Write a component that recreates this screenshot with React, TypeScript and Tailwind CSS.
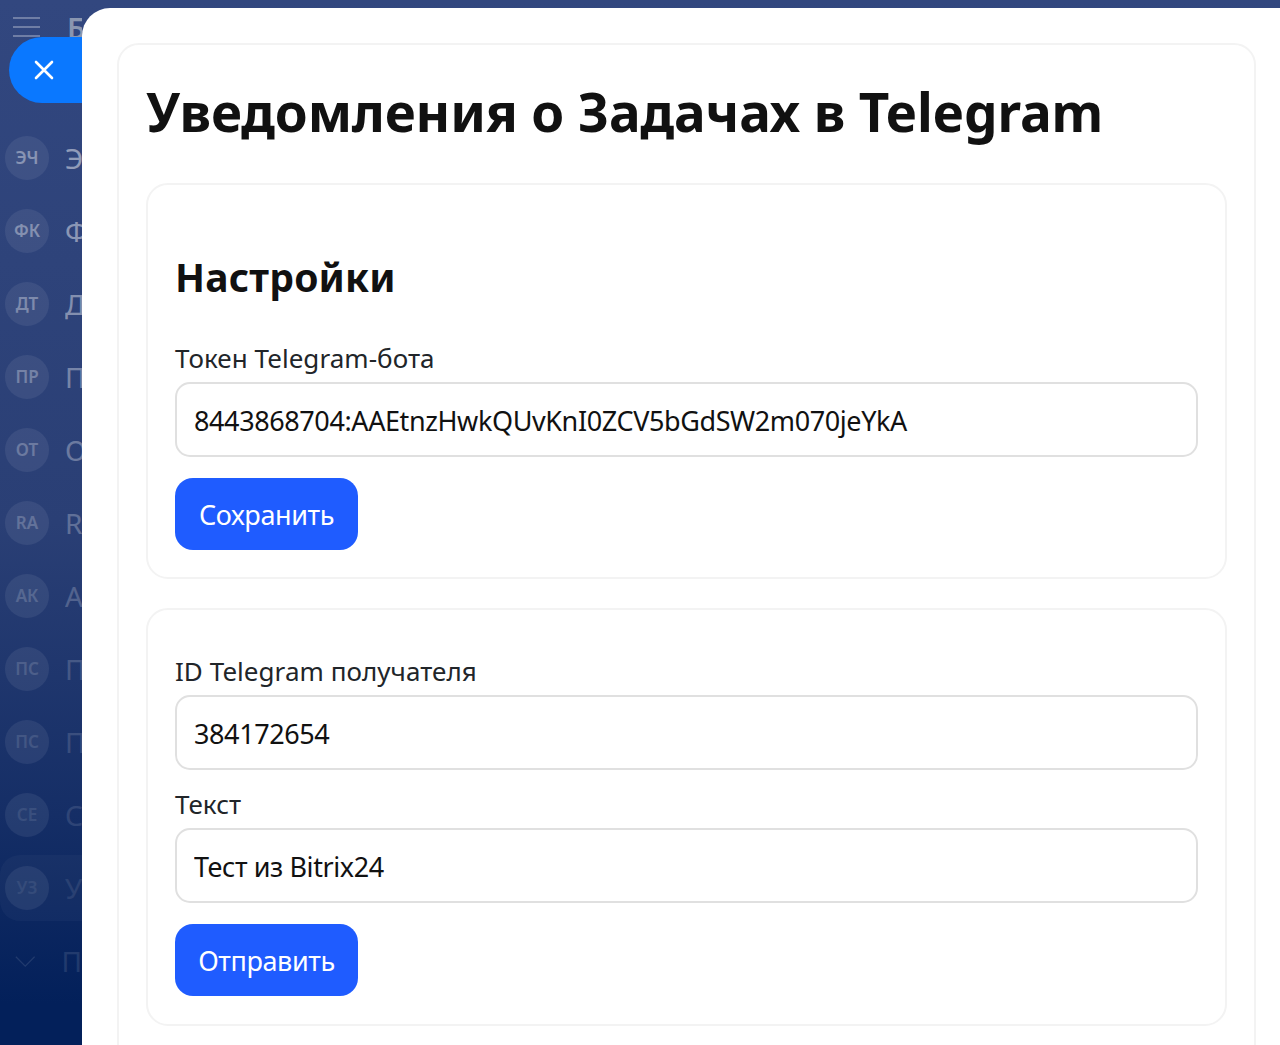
const font = { fontFamily: '"Noto Sans", "Open Sans", sans-serif' };

const rows = [
  ["ЭЧ", "Э", 0.55],
  ["ФК", "Ф", 0.52],
  ["ДТ", "Д", 0.48],
  ["ПР", "П", 0.42],
  ["ОТ", "О", 0.36],
  ["RA", "R", 0.3],
  ["АК", "А", 0.24],
  ["ПС", "П", 0.2],
  ["ПС", "П", 0.16],
  ["СЕ", "С", 0.13],
  ["УЗ", "У", 0.1],
] as const;

function Field({ label, value }: { label: string; value: string }) {
  return (
    <div>
      <div className="text-[26px] leading-[28px] text-[#212529] h-[38px] tracking-[0.05px]">{label}</div>
      <input
        readOnly
        value={value}
        className="block w-full h-[75px] rounded-[15px] border-2 border-[#e0e0e0] bg-white px-[17px] pt-[2px] text-[27px] text-[#111] tracking-[-0.4px] outline-none"
      />
    </div>
  );
}

function Btn({ children }: { children: string }) {
  return (
    <button className="w-[183px] h-[72px] rounded-[18px] bg-[#1f5cff] pt-[3px] text-white text-[27px] tracking-[-0.4px]">
      {children}
    </button>
  );
}

export default function App() {
  return (
    <div className="relative h-[1045px] w-[1280px] overflow-hidden bg-[linear-gradient(180deg,#32477f_0%,#2a3f75_50%,#152e66_78%,#03205a_96%)]" style={font}>
      <aside className="w-[82px] h-full overflow-hidden">
        <div className="h-[120px] relative">
          <div className="absolute left-[13px] top-[17px] w-[27px] flex flex-col gap-[7px]">
            <div className="h-[2px] bg-white/30" />
            <div className="h-[2px] bg-white/30" />
            <div className="h-[2px] bg-white/30" />
          </div>
          <div className="absolute left-[67px] top-[6px] text-[29px] font-semibold text-[#8a96b0]">Б</div>
        </div>
        <div className="flex flex-col pt-[1px]">
          {rows.map(([a, l, o], i) => (
            <div key={i} className="flex items-center h-[73px] whitespace-nowrap">
              <div className={`flex items-center gap-[16px] pl-[5px] w-full h-[66px] ${i === 10 ? "bg-white/[0.03] rounded-l-[20px]" : ""}`}>
                <div className="w-[44px] h-[44px] shrink-0 rounded-full bg-white/[0.07] flex items-center justify-center text-[17px] font-semibold">
                  <span className="text-white" style={{ opacity: o * 0.7 }}>{a}</span>
                </div>
                <div className="text-[28px] text-white" style={{ opacity: o * 0.85 }}>{l}</div>
              </div>
            </div>
          ))}
          <div className="flex items-center pl-[15px] h-[73px] opacity-[0.1] text-white">
            <svg width="24" height="24" viewBox="0 0 24 24" fill="none" stroke="currentColor" strokeWidth="1.5"><path d="M1 7l11 11L23 7" /></svg>
            <div className="text-[28px] ml-[26px]">П</div>
          </div>
        </div>
      </aside>

      <div className="absolute left-[9px] top-[37px] w-[90px] h-[66px] rounded-l-[33px] bg-[#0a78ff] text-white flex items-center pl-[24px]">
        <svg width="22" height="22" viewBox="0 0 22 22" fill="none" stroke="currentColor" strokeWidth="2.6" strokeLinecap="round"><path d="M3 3l16 16M19 3L3 19" /></svg>
      </div>

      <main className="absolute left-[82px] top-[8px] right-0 bottom-0 bg-white rounded-tl-[28px] pl-[35px] pr-[24px] pt-[35px]">
        <div className="h-[1100px] rounded-[22px] border-2 border-[#f3f3f3] px-[27px]">
          <h1 className="text-[53px] font-bold leading-[68px] text-[#111] mt-[33px] mb-[37px] tracking-[-0.14px] whitespace-nowrap">Уведомления о Задачах в Telegram</h1>
          <section className="h-[396px] rounded-[22px] border-2 border-[#f3f3f3] px-[27px] pt-[67px]">
            <h2 className="text-[39px] font-bold leading-[50px] text-[#111] mb-[42px] tracking-[0.2px]">Настройки</h2>
            <Field label="Токен Telegram-бота" value="8443868704:AAEtnzHwkQUvKnI0ZCV5bGdSW2m070jeYkA" />
            <div className="mt-[21px]"><Btn>Сохранить</Btn></div>
          </section>
          <section className="mt-[29px] h-[418px] rounded-[22px] border-2 border-[#f3f3f3] px-[27px] pt-[47px]">
            <Field label="ID Telegram получателя" value="384172654" />
            <div className="mt-[20px]"><Field label="Текст" value="Тест из Bitrix24" /></div>
            <div className="mt-[21px]"><Btn>Отправить</Btn></div>
          </section>
        </div>
      </main>
    </div>
  );
}
